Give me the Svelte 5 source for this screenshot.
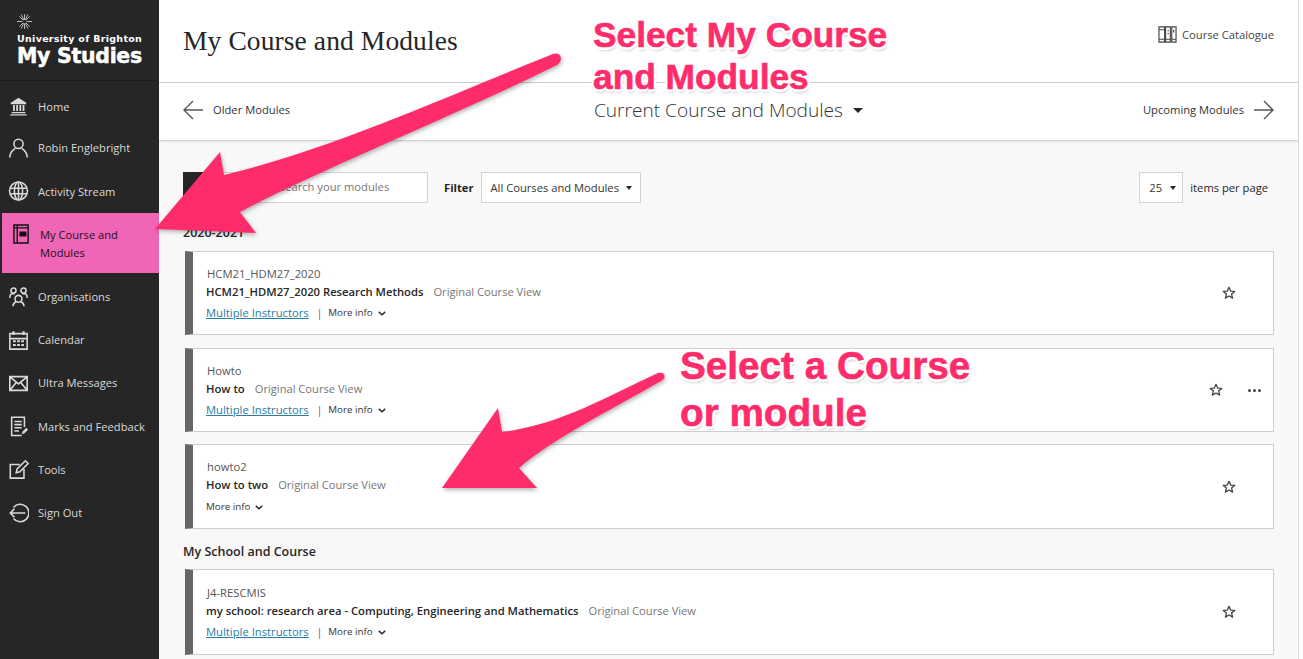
<script>
  const navTop = [
    { label: 'Home', h: 40, icon: '<path d="M3 8.500 11.500 3 20 8.500v1.500H3zM4 20h15v-1.500H4zM2.500 22.500h18V21h-18z" fill="currentColor" stroke="none"/><path d="M6.500 11v6.500M10 11v6.500M13.500 11v6.500M17 11v6.500" stroke-width="2"/>' },
    { label: 'Robin Englebright', h: 43, icon: '<circle cx="11.500" cy="7.500" r="5"/><path d="M2 22.500c0-5.500 3.500-8.500 6-10M21 22.500c0-5.500-3.500-8.500-6-10"/>' },
    { label: 'Activity Stream', h: 44, icon: '<circle cx="11.500" cy="12" r="9.800"/><ellipse cx="11.500" cy="12" rx="4.500" ry="9.800"/><path d="M2.500 9h18M2.500 15h18M11.500 2.500v19"/>' }
  ]
  const navBottom = [
    { label: 'Organisations', icon: '<circle cx="6" cy="5" r="2.800"/><circle cx="17" cy="5" r="2.800"/><circle cx="11.500" cy="14" r="3.800"/><path d="M2 13c0-3 1-4.500 3-4.500h2.500M21 13c0-3-1-4.500-3-4.500h-2.500M5.500 22c0-2.500 1.500-4 3.500-5M17.500 22c0-2.500-1.500-4-3.500-5"/>' },
    { label: 'Calendar', icon: '<path d="M2 5h19v17H2zM2 10.500h19"/><path d="M6 2.500v4M17 2.500v4" stroke-width="2.400"/><path d="M5.500 13.500h3M10 13.500h3M14.500 13.500h3M5.500 17.500h3M10 17.500h3M14.500 17.500h3" stroke-width="2.200"/>' },
    { label: 'Ultra Messages', icon: '<path d="M2 5h19v15H2zM2.500 5.500l9 7.500 9-7.500M2.500 19.500l6.500-8M20.500 19.500l-6.500-8" stroke-width="1.800"/>' },
    { label: 'Marks and Feedback', icon: '<path d="M18 13V2.500H4v20h11"/><path d="M7 7h8M7 10.500h8M7 14h8M7 17.500h5"/><path d="M15 21l1-3 4-4 2 2-4 4z" fill="currentColor" stroke="none"/>' },
    { label: 'Tools', icon: '<path d="M13 7H2.500v15h15v-10"/><path d="M9 16l1-4 9-9 3 3-9 9z"/>' },
    { label: 'Sign Out', icon: '<path d="M6 6a9.500 9.500 0 1 1 0 12"/><path d="M19 12H3M7 7.500 2.500 12 7 16.500"/>' }
  ]

  const firstGroup = [
    { code: 'HCM21_HDM27_2020', title: 'HCM21_HDM27_2020 Research Methods', teachers: true, h: 84, mb: 13 },
    { code: 'Howto', title: 'How to', teachers: true, menu: true, h: 84, mb: 12 },
    { code: 'howto2', title: 'How to two', teachers: false, h: 85, mb: 0 }
  ]
  const secondGroup = [
    { code: 'J4-RESCMIS', title: 'my school: research area - Computing, Engineering and Mathematics', teachers: true, h: 86, mb: 0 }
  ]
</script>

{#snippet card(c)}
  <article class="card" style="height: {c.h}px; margin-bottom: {c.mb}px">
    <div class="card-body">
      <div class="code">{c.code}</div>
      <div class="title-line"><strong>{c.title}</strong><span class="view">Original Course View</span></div>
      <div class="meta">
        {#if c.teachers}
          <a href="#top">Multiple Instructors</a><span class="pipe">|</span>
        {/if}
        <span class="more">More info</span>
        <svg class="chev" viewBox="0 0 10 6" width="8" height="5"><path d="M1 1l4 3.500L9 1" fill="none" stroke="#262626" stroke-width="1.800"/></svg>
      </div>
    </div>
    <div class="card-actions" class:with-menu={c.menu}>
      <svg viewBox="0 0 16 16" width="14" height="14"><path d="M8 1.500l1.900 4.300 4.600.4-3.500 3 1.100 4.600L8 11.400l-4.100 2.400L5 9.200l-3.500-3 4.600-.4z" fill="none" stroke="#444" stroke-width="1.500" stroke-linejoin="round"/></svg>
      {#if c.menu}
        <span class="dots"><i></i><i></i><i></i></span>
      {/if}
    </div>
  </article>
{/snippet}

{#snippet navItem(item)}
  <li class="nav-item" style={item.h ? `height: ${item.h}px` : ''}>
    <svg viewBox="0 0 23 24" width="21" height="22" fill="none" stroke="currentColor" stroke-width="1.700">{@html item.icon}</svg>
    <span>{item.label}</span>
  </li>
{/snippet}

<div class="page" id="top">
  <aside class="sidebar">
    <div class="logo">
      <svg class="star" viewBox="0 0 16 16" width="15" height="15"><path d="M8 0v16M0 8h16M2.500 2.500l11 11M13.500 2.500l-11 11M4.500 0.500l7 15M11.500 0.500l-7 15" stroke="#eee" stroke-width="0.800"/><circle cx="8" cy="8" r="2" fill="#262626"/></svg>
      <div class="uni">University of Brighton</div>
      <div class="studies">My Studies</div>
    </div>
    <ul class="nav">
      {#each navTop as item}
        {@render navItem(item)}
      {/each}
      <li class="nav-active">
        <svg viewBox="0 0 18 21" width="17" height="20" fill="none" stroke="#111" stroke-width="1.500"><path d="M1 1h15v19H1zM4.500 1v19M1 4h15"/><path d="M7.500 8.500h6v4h-6z" fill="#111"/></svg>
        <span>My Course and<br />Modules</span>
      </li>
      {#each navBottom as item}
        {@render navItem(item)}
      {/each}
    </ul>
  </aside>

  <main class="main">
    <header class="head">
      <h1>My Course and Modules</h1>
      <div class="catalogue">
        <svg viewBox="0 0 20 20" width="19" height="19" fill="none" stroke="#444" stroke-width="1.200"><path d="M1 2h6v16H1zM1 5h6M1 15h6M8 2h5v16H8zM8 15h5M14.500 2H19v16h-4.500zM14.500 15H19"/><path d="M10 6h1.500M10 9h1.500M16.500 5v3"/></svg>
        <span>Course Catalogue</span>
      </div>
    </header>

    <nav class="term">
      <div class="term-side">
        <svg viewBox="0 0 20 20" width="20" height="20" fill="none" stroke="#555" stroke-width="1.400"><path d="M20 10H1M10 1l-9 9 9 9"/></svg>
        <span>Older Modules</span>
      </div>
      <div class="term-current">
        <span>Current Course and Modules</span>
        <i class="caret big"></i>
      </div>
      <div class="term-side">
        <span>Upcoming Modules</span>
        <svg viewBox="0 0 20 20" width="20" height="20" fill="none" stroke="#555" stroke-width="1.400"><path d="M0 10h19M10 1l9 9-9 9"/></svg>
      </div>
    </nav>

    <section class="content">
      <div class="filters">
        <div class="search">
          <span class="search-btn"></span>
          <span class="search-field">Search your modules</span>
        </div>
        <b class="filter-label">Filter</b>
        <div class="select wide"><span>All Courses and Modules</span><i class="caret"></i></div>
        <div class="per-page">
          <div class="select small"><span>25</span><i class="caret"></i></div>
          <span>items per page</span>
        </div>
      </div>

      <h2 class="term-name">2020-2021</h2>
      {#each firstGroup as c}
        {@render card(c)}
      {/each}

      <h2 class="school">My School and Course</h2>
      {#each secondGroup as c}
        {@render card(c)}
      {/each}
    </section>
  </main>
  <div class="scroll-track"></div>

  <!-- annotations pasted over the screenshot -->
  <div class="notes">
    <svg class="arrows" viewBox="0 0 1303 659" width="1303" height="659">
      <path d="M155 229 220 152 224 175C330 150 450 95 553 54 561 51 564 60 557 65 450 118 330 165 240 212L256 233Z" fill="#fe2c6b"/>
      <path d="M442 488 498 408 502 432C560 425 610 395 658 373 665 371 667 378 661 381 620 405 550 440 519 468L537 488Z" fill="#fe2c6b"/>
    </svg>
    <div class="note note-a">Select My Course<br />and Modules</div>
    <div class="note note-b">Select a Course<br />or module</div>
  </div>
</div>

<style>
  :global(body) {
    margin: 0;
    font-family: "Open Sans", sans-serif;
    color: #262626;
  }
  .page {
    position: relative;
    display: flex;
    width: 1303px;
    height: 659px;
    overflow: hidden;
    background: #f8f8f8;
  }

  /* sidebar */
  .sidebar {
    flex: 0 0 159px;
    background: #262626;
    color: #d9d9d9;
  }
  .logo {
    height: 81px;
    padding: 14px 0 0 17px;
    box-sizing: border-box;
    border-bottom: 1px solid #1d1d1d;
    color: #fff;
  }
  .star {
    display: block;
  }
  .uni {
    margin-top: 4px;
    font: 700 9.500px/11px "DejaVu Sans", sans-serif;
    letter-spacing: 0.300px;
    white-space: nowrap;
  }
  .studies {
    font: 700 20.500px/24px "DejaVu Sans", sans-serif;
    letter-spacing: -0.300px;
    -webkit-text-stroke: 0.500px #fff;
    white-space: nowrap;
  }
  .nav {
    list-style: none;
    margin: 5px 0 0;
    padding: 0;
  }
  .nav-item {
    display: flex;
    align-items: center;
    gap: 9px;
    height: 43.200px;
    padding-left: 8px;
    font-size: 11.150px;
    white-space: nowrap;
  }
  .nav-active {
    display: flex;
    align-items: flex-start;
    gap: 10px;
    height: 60px;
    margin: 0 0 2px 2px;
    padding: 11px 0 0 11px;
    box-sizing: border-box;
    background: #ee66b5;
    color: #1d1020;
    font-size: 11.150px;
    line-height: 18px;
  }
  .nav-active span {
    margin-top: 2px;
  }

  /* main column */
  .main {
    flex: 0 0 1139px;
    display: flex;
    flex-direction: column;
    min-width: 0;
  }
  .head {
    display: flex;
    justify-content: space-between;
    height: 83px;
    padding: 0 24px;
    box-sizing: border-box;
    background: #fff;
    border-bottom: 1px solid #cdcdcd;
  }
  h1 {
    margin: 23px 0 0;
    font: 400 27.500px/36px "Liberation Serif", serif;
    letter-spacing: 0.100px;
    color: #262626;
  }
  .catalogue {
    display: flex;
    align-items: center;
    gap: 5px;
    height: 20px;
    margin-top: 24px;
    font-size: 11.200px;
    color: #444;
  }
  .term {
    display: flex;
    align-items: center;
    justify-content: space-between;
    height: 58px;
    padding: 0 24px 4px;
    box-sizing: border-box;
    background: #fff;
    border-bottom: 1px solid #d4d4d4;
    box-shadow: 0 1px 2px rgba(0, 0, 0, 0.08);
    position: relative;
    font-size: 11.200px;
    color: #333;
  }
  .term-side {
    display: flex;
    align-items: center;
    gap: 10px;
  }
  .term-current {
    position: absolute;
    left: 435px;
    top: 14px;
    display: flex;
    align-items: center;
    gap: 10px;
    font-size: 19.100px;
    font-weight: 300;
    line-height: 26px;
    color: #333;
  }
  .caret {
    display: inline-block;
    width: 0;
    height: 0;
    border: 3px solid transparent;
    border-top: 4px solid #262626;
    border-bottom: 0;
  }
  .caret.big {
    border-width: 5px 5px 0;
  }

  .content {
    flex: 1;
    padding: 31px 24px 0 26px;
    min-height: 0;
  }
  .filters {
    position: relative;
    display: flex;
    align-items: center;
    height: 31px;
    margin-left: -2px;
    font-size: 11.200px;
  }
  .search {
    display: flex;
    width: 245px;
    height: 31px;
    margin-top: -1px;
  }
  .search-btn {
    flex: 0 0 30px;
    background: #262626;
  }
  .search-field {
    flex: 1;
    padding-left: 66px;
    box-sizing: border-box;
    background: #fff;
    border: 1px solid #d4d4d4;
    border-left: 0;
    line-height: 27px;
    color: #777;
    white-space: nowrap;
    overflow: hidden;
  }
  .filter-label {
    margin-left: 16px;
    font-weight: 700;
  }
  .select {
    display: flex;
    align-items: center;
    gap: 7px;
    height: 31px;
    padding: 0 9px;
    box-sizing: border-box;
    background: #fff;
    border: 1px solid #d4d4d4;
    white-space: nowrap;
    color: #333;
  }
  .wide {
    margin-left: 7px;
    width: 160px;
  }
  .per-page {
    display: flex;
    align-items: center;
    gap: 7px;
    margin-left: auto;
    margin-right: 6px;
    white-space: nowrap;
  }
  .small {
    width: 44px;
    gap: 8px;
  }
  h2 {
    margin: 0;
    font-size: 12.500px;
    font-weight: 600;
    color: #262626;
  }
  .term-name {
    margin: 20px 0 0 -2px;
    height: 28px;
    line-height: 20px;
  }
  .school {
    margin: 13px 0 0 -2px;
    height: 27px;
    line-height: 20px;
  }

  /* course cards */
  .card {
    display: flex;
    justify-content: space-between;
    align-items: center;
    box-sizing: border-box;
    background: #fff;
    border: 1px solid #cfcfcf;
    border-left: 8px solid #666;
  }
  .card-body {
    padding: 4px 0 0 13px;
    font-size: 11.250px;
  }
  .code {
    margin-left: 1px;
    line-height: 16px;
    color: #555;
  }
  .title-line {
    line-height: 19px;
    white-space: nowrap;
  }
  .title-line strong {
    font-weight: 600;
    color: #262626;
  }
  .view {
    margin-left: 10px;
    font-size: 11.150px;
    color: #767676;
  }
  .meta {
    display: flex;
    align-items: center;
    height: 24px;
    white-space: nowrap;
  }
  .meta a {
    color: #2a7ba6;
    text-decoration: underline;
  }
  .pipe {
    margin: 0 6px 0 8px;
    color: #555;
    font-size: 10px;
  }
  .more {
    font-size: 9.800px;
    color: #333;
    margin-right: 5px;
  }
  .chev {
    margin-top: 2px;
  }
  .card-actions {
    display: flex;
    align-items: center;
    gap: 25px;
    padding-right: 37px;
  }
  .card-actions.with-menu {
    padding-right: 12px;
  }
  .dots {
    display: flex;
    gap: 2px;
  }
  .dots i {
    width: 3px;
    height: 3px;
    border-radius: 50%;
    background: #444;
  }

  .scroll-track {
    flex: 1;
    background: #fff;
    border-left: 1px solid #ddd;
  }

  /* annotation layer */
  .notes {
    position: absolute;
    inset: 0;
    pointer-events: none;
  }
  .arrows {
    position: absolute;
    left: 0;
    top: 0;
    filter: drop-shadow(1px 2px 2px rgba(0, 0, 0, 0.3));
  }
  .note {
    position: absolute;
    font: 700 35.300px/42px "Liberation Sans", sans-serif;
    color: #fe2c6b;
    white-space: nowrap;
    -webkit-text-stroke: 0.600px #fe2c6b;
    text-shadow:
      2.500px 0 0 #fff, -2.500px 0 0 #fff, 0 2.500px 0 #fff, 0 -2.500px 0 #fff,
      2px 2px 0 #fff, -2px 2px 0 #fff, 2px -2px 0 #fff, -2px -2px 0 #fff,
      1px 3px 3px rgba(0, 0, 0, 0.35);
  }
  .note-a {
    left: 593px;
    top: 14px;
  }
  .note-b {
    left: 680px;
    top: 343px;
    font-size: 38.700px;
    line-height: 46.500px;
  }
</style>
